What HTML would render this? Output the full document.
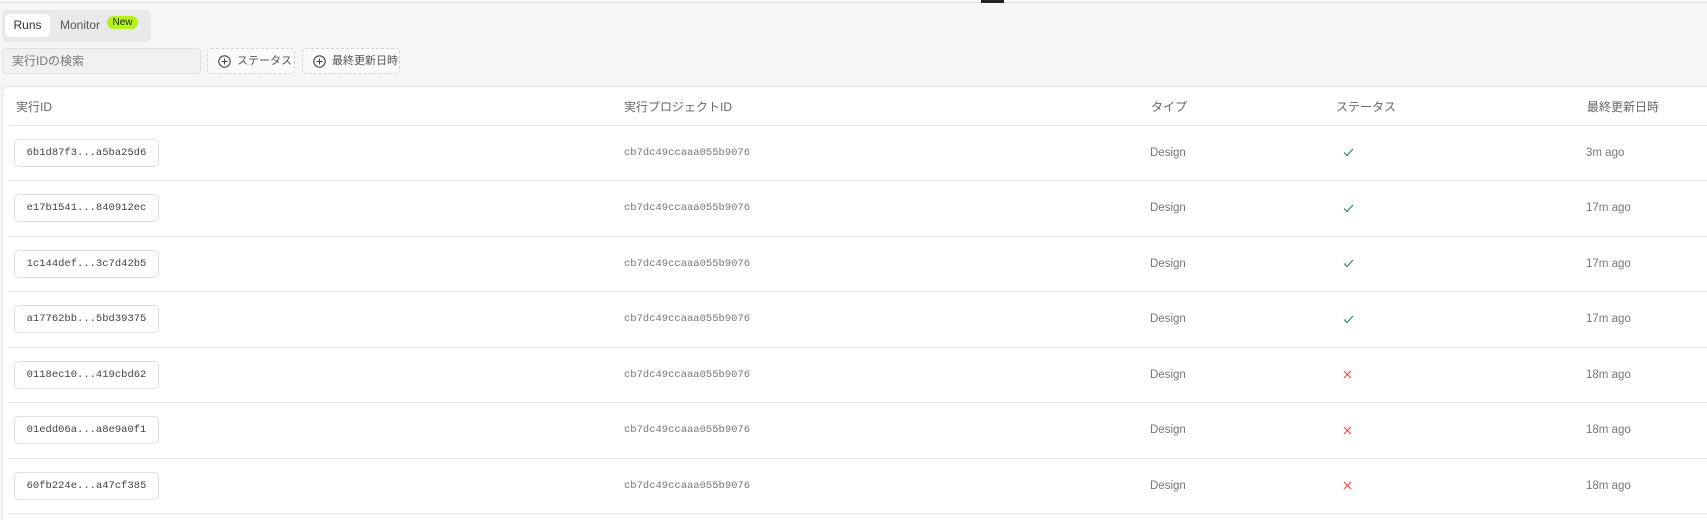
<!DOCTYPE html>
<html><head><meta charset="utf-8"><style>
*{box-sizing:border-box;margin:0;padding:0}
html{width:1707px;height:520px;overflow:hidden}
body{width:1707px;height:520px;background:#f6f6f6;font-family:"Liberation Sans","Noto Sans CJK JP",sans-serif;color:#666;overflow:hidden;position:relative;font-size:12px}
.topline{position:absolute;left:0;top:2px;width:1707px;height:1px;background:#e2e2e2}
.topbar{position:absolute;left:981px;top:0;width:23px;height:3px;background:#222}
.tabs{position:absolute;left:2px;top:10px;width:149px;height:32px;background:#e9e9ec;border-radius:6px}
.runs{position:absolute;left:3px;top:4px;width:45px;height:23px;background:#fff;border-radius:5px;text-align:center;line-height:23px;color:#333}
.mon{position:absolute;left:58px;top:0;line-height:31px;color:#555}
.new{position:absolute;left:105px;top:6px;width:31px;height:13px;background:#b4f315;border-radius:7px;font-size:10px;line-height:13px;text-align:center;color:#222}
.search{position:absolute;left:2px;top:48px;width:199px;height:26px;background:#f0f0f0;border:1px solid #e0e0e0;border-radius:4px;padding-left:9px;line-height:24px;color:#777}
.btn{position:absolute;top:48px;height:26px;border:1px dashed #d4d4d4;border-radius:4px;line-height:24px;color:#555;background:#fafafa}
.btn svg{position:absolute;left:10px;top:6px}
.card{position:absolute;left:2px;top:86px;width:1720px;height:434px;background:#fff;border:1px solid #e2e2e2;border-bottom:none;border-radius:6px 6px 0 0}
.row{position:absolute;left:6px;width:1720px;border-bottom:1px solid #e4e4e4}
.c{position:absolute;top:0;height:100%;display:flex;align-items:center}
.pill{position:absolute;left:6px;width:145px;height:28px;border:1px solid #ddd;border-radius:5px;font-family:"Liberation Mono",monospace;font-size:10.5px;color:#444;text-align:center;line-height:26px}
.mono{font-family:"Liberation Mono",monospace;font-size:10.5px;color:#777}
.t{font-size:11.5px;color:#777}
</style></head><body>
<div class="topline"></div><div class="topbar"></div>
<div class="tabs"><div class="runs">Runs</div><div class="mon">Monitor</div><div class="new">New</div></div>
<div class="search">実行IDの検索</div>
<div class="btn" style="left:207px;width:88px"><svg width="13" height="13" viewBox="0 0 13 13"><circle cx="6.5" cy="6.5" r="5.7" fill="none" stroke="#444" stroke-width="1.1"/><path d="M6.5 3.5v6M3.5 6.5h6" stroke="#444" stroke-width="1.1"/></svg><span style="position:absolute;left:29px;font-size:11px">ステータス</span></div>
<div class="btn" style="left:302px;width:98px"><svg width="13" height="13" viewBox="0 0 13 13"><circle cx="6.5" cy="6.5" r="5.7" fill="none" stroke="#444" stroke-width="1.1"/><path d="M6.5 3.5v6M3.5 6.5h6" stroke="#444" stroke-width="1.1"/></svg><span style="position:absolute;left:29px;font-size:11px">最終更新日時</span></div>
<div class="card">
<div class="row" style="top:0;height:39px">
<div class="c" style="left:7px">実行ID</div><div class="c" style="left:615px">実行プロジェクトID</div><div class="c" style="left:1142px">タイプ</div><div class="c" style="left:1327px">ステータス</div><div class="c" style="left:1578px">最終更新日時</div></div>
</div>
<div id="rows"></div>
<script>
var d=[["6b1d87f3...a5ba25d6",1,"3m ago"],["e17b1541...840912ec",1,"17m ago"],["1c144def...3c7d42b5",1,"17m ago"],["a17762bb...5bd39375",1,"17m ago"],["0118ec10...419cbd62",0,"18m ago"],["01edd06a...a8e9a0f1",0,"18m ago"],["60fb224e...a47cf385",0,"18m ago"]];
var ok='<svg width="11" height="9" viewBox="0 0 11 9"><path d="M1 4.5l3 3L10 1" fill="none" stroke="#2a8a5a" stroke-width="1.2"/></svg>';
var ng='<svg width="9" height="9" viewBox="0 0 9 9"><path d="M1 1l7 7M8 1L1 8" stroke="#e05050" stroke-width="1.2"/></svg>';
var h="";
d.forEach(function(r,i){var t=125.5+i*55.5;
h+='<div class="row" style="left:8px;top:'+t+'px;height:55.5px"><div class="pill" style="top:13px">'+r[0]+'</div><div class="c mono" style="left:616px">cb7dc49ccaaa055b9076</div><div class="c t" style="left:1142px">Design</div><div class="c" style="left:1335px">'+(r[1]?ok:ng)+'</div><div class="c t" style="left:1578px">'+r[2]+'</div></div>';});
document.getElementById("rows").innerHTML=h;
</script>
</body></html>
